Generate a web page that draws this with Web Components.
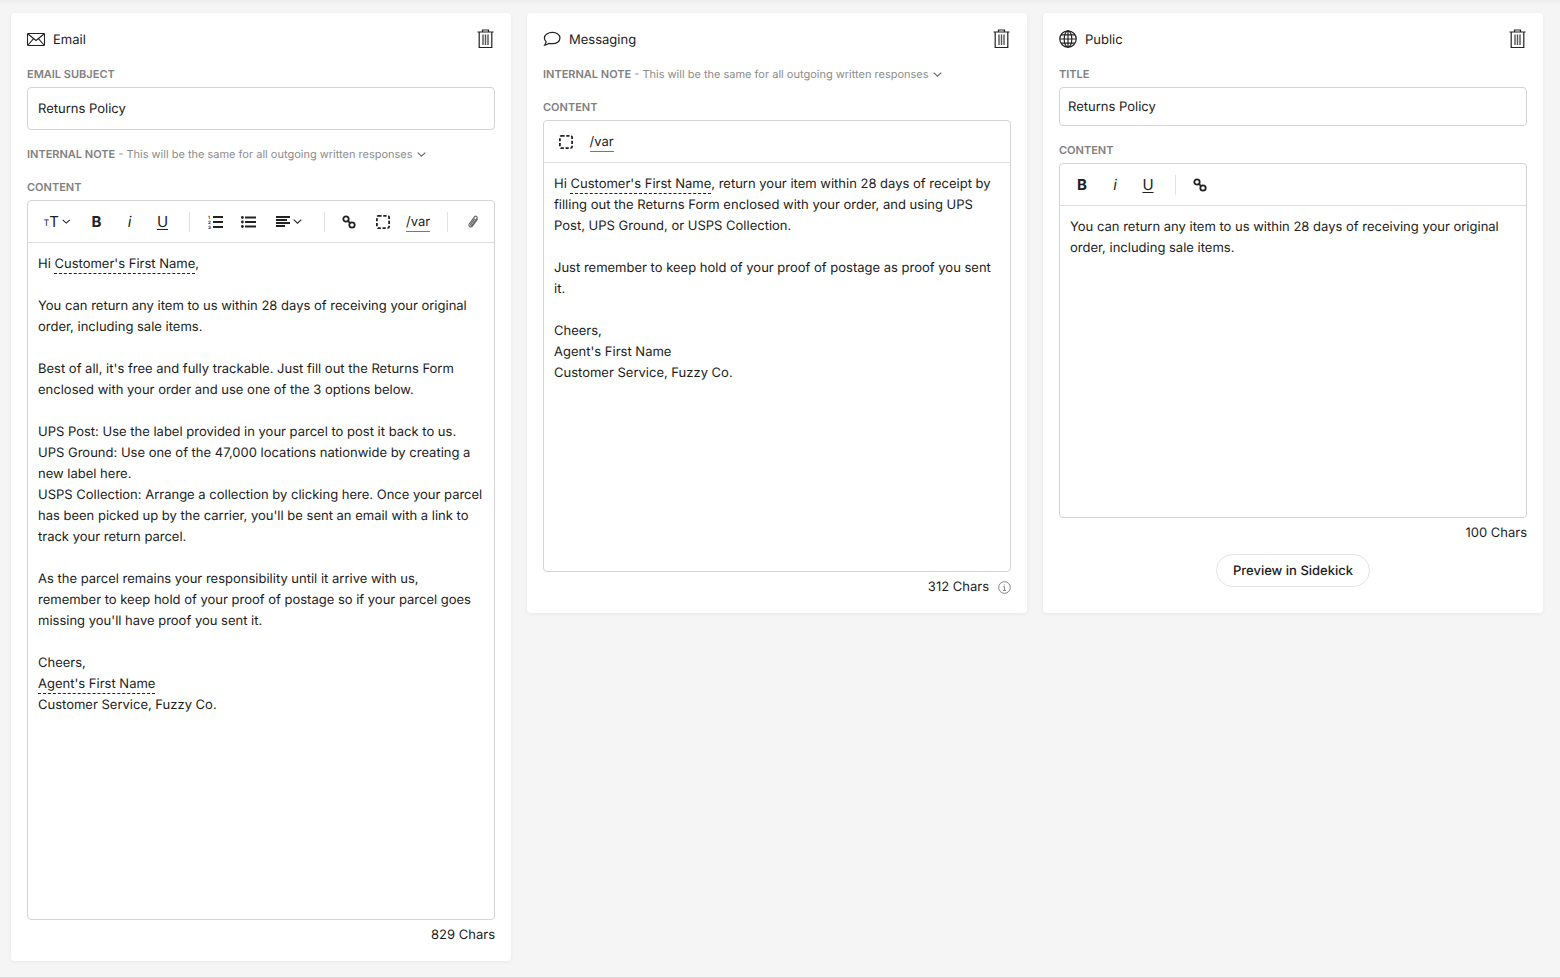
<!DOCTYPE html>
<html>
<head>
<meta charset="utf-8">
<title>Returns Policy</title>
<style>
  html, body { margin: 0; height: 100%; }
  body {
    box-sizing: border-box; height: 978px; overflow: hidden;
    padding: 13px 17px 0 11px;
    background: linear-gradient(#eeeeee, #f5f5f5 6px); border-bottom: 1px solid #d9d9d9;
    font-family: Inter, "Liberation Sans", sans-serif; font-size: 13px; color: #1c1c1c;
    text-rendering: geometricPrecision;
  }
  .board { display: flex; align-items: flex-start; gap: 16px; }
</style>
</head>
<body>
<div class="board">

  <x-card title="Email" icon="mail" height="948">
    <x-field label="Email subject" value="Returns Policy" h="43" pad="10"></x-field>
    <x-note style="margin-top:17px"></x-note>
    <x-editor tools="text,b,i,u,sep,ol,ul,align,sep,link,frame,var,sep,clip" body-h="676" count="829 Chars" style="margin-top:19px">
      <p>Hi <x-var>Customer's First Name</x-var>,</p>
      <p><br></p>
      <p>You can return any item to us within 28 days of receiving your original order, including sale items.</p>
      <p><br></p>
      <p>Best of all, it's free and fully trackable. Just fill out the Returns Form enclosed with your order and use one of the 3 options below.</p>
      <p><br></p>
      <p>UPS Post: Use the label provided in your parcel to post it back to us.</p>
      <p>UPS Ground: Use one of the 47,000 locations nationwide by creating a new label here.</p>
      <p>USPS Collection: Arrange a collection by clicking here. Once your parcel has been picked up by the carrier, you'll be sent an email with a link to track your return parcel.</p>
      <p><br></p>
      <p>As the parcel remains your responsibility until it arrive with us, remember to keep hold of your proof of postage so if your parcel goes missing you'll have proof you sent it.</p>
      <p><br></p>
      <p>Cheers,</p>
      <p><x-var>Agent's First Name</x-var></p>
      <p>Customer Service, Fuzzy Co.</p>
    </x-editor>
  </x-card>

  <x-card title="Messaging" icon="chat" height="600">
    <x-note></x-note>
    <x-editor tools="frame,var" body-h="408" count="312 Chars" info style="margin-top:19px">
      <p>Hi <x-var>Customer's First Name</x-var>, return your item within 28 days of receipt by<br>filling out the Returns Form enclosed with your order, and using UPS Post, UPS Ground, or USPS Collection.</p>
      <p><br></p>
      <p>Just remember to keep hold of your proof of postage as proof you sent it.</p>
      <p><br></p>
      <p>Cheers,</p>
      <p>Agent's First Name</p>
      <p>Customer Service, Fuzzy Co.</p>
    </x-editor>
  </x-card>

  <x-card title="Public" icon="globe" height="600">
    <x-field label="Title" value="Returns Policy" h="39" pad="8"></x-field>
    <x-editor tools="b,i,u,sep,link" body-h="311" count="100 Chars" style="margin-top:17px">
      <p>You can return any item to us within 28 days of receiving your original order, including sale items.</p>
    </x-editor>
    <x-pill style="margin-top:8px">Preview in Sidekick</x-pill>
  </x-card>

</div>

<script>
// icons, drawn by hand against the screenshot
const ICONS = {
  mail: '<svg width="18" height="13" viewBox="0 0 18 13" fill="none" stroke="#222" stroke-width="1.1"><rect x=".5" y=".5" width="17" height="12" rx="1"/><path d="M1 1l8 6.5L17 1M1 12l5.6-6.4M17 12l-5.6-6.4"/></svg>',
  chat: '<svg width="19" height="16" viewBox="0 0 19 16" fill="none" stroke="#222" stroke-width="1.3"><path d="M10 1C5.400 1 1.500 3.400 1.500 7c0 1.500.7 2.800 1.800 3.800-.2 1.400-.8 2.700-1.500 3.700 1.700-.2 3.300-1 4.300-1.900 1.100.3 2.300.4 3.900.4 4.300 0 7.900-2.500 7.900-6S14.300 1 10 1z"/></svg>',
  globe: '<svg width="18" height="18" viewBox="0 0 18 18" fill="none" stroke="#222" stroke-width="1.2"><circle cx="9" cy="9" r="8.200"/><ellipse cx="9" cy="9" rx="3.800" ry="8.200"/><path d="M9 .8v16.400M.8 9h16.400M2 4.800h14M2 13.200h14"/></svg>',
  trash: '<svg width="17" height="20" viewBox="0 0 17 20" fill="none" stroke="#222" stroke-width="1.2"><path d="M.5 3h16M5.500 3V1h6v2"/><path d="M2.200 3v15.500h12.600V3"/><path d="M6 5.500V16M8.500 5.500V16M11 5.500V16" stroke-width="1.400" stroke="#555"/></svg>',
  chevron: '<svg width="9" height="5" viewBox="0 0 9 5" fill="none" stroke="currentColor" stroke-width="1.1"><path d="M.7.7l3.800 3.500L8.300.7"/></svg>',
  ol: '<svg width="15" height="16" viewBox="0 -1 15 16" fill="#222"><path d="M5 1h10v2H5zM5 6h10v2H5zM5 11h10v2H5z"/><text x="0" y="4" font-size="4.500" font-family="Inter" font-weight="700">1</text><text x="0" y="9" font-size="4.500" font-family="Inter" font-weight="700">2</text><text x="0" y="14" font-size="4.500" font-family="Inter" font-weight="700">3</text></svg>',
  ul: '<svg width="15" height="12" viewBox="0 0 15 12" fill="#222"><path d="M4 .5h11v2H4zM4 5h11v2H4zM4 9.500h11v2H4z"/><circle cx="1.400" cy="1.500" r="1.400"/><circle cx="1.400" cy="6" r="1.400"/><circle cx="1.400" cy="10.500" r="1.400"/></svg>',
  align: '<svg width="14" height="11" viewBox="0 0 14 11" fill="#222"><path d="M0 0h14v2H0zM0 3h11v2H0zM0 6h14v2H0zM0 9h9v2H0z"/></svg>',
  link: '<svg width="14" height="14" viewBox="0 0 14 14" fill="none" stroke="#222" stroke-width="1.800"><circle cx="4" cy="4" r="2.700"/><circle cx="10" cy="10" r="2.700"/><path d="M5.800 5.800l2.400 2.400"/></svg>',
  frame: '<svg width="14" height="14" viewBox="0 0 14 14" fill="none" stroke="#222" stroke-width="1.800"><rect x=".9" y=".9" width="12.200" height="12.200" rx="1.500" stroke-dasharray="3.200 1.700"/></svg>',
  clip: '<svg width="11" height="13" viewBox="0 0 11 13" fill="none" stroke="#666" stroke-width="1.100"><path d="M9.800 3.800L4.600 10.900c-.8 1-2 1.200-2.900.6-.9-.7-1-1.800-.3-2.800l5-6.800c.6-.8 1.400-1 2.100-.5s.8 1.300.2 2.100L4 10c-.3.400-.8.500-1.100.2-.4-.3-.4-.7-.1-1.100l4-5.500"/></svg>',
  info: '<svg width="13" height="13" viewBox="0 0 13 13" fill="none" stroke="#777" stroke-width=".9"><circle cx="6.500" cy="6.500" r="5.800"/><path d="M5.300 5.600h1.300v3.800M5 9.400h3M6.400 3.400v1"/></svg>'
};

class XCard extends HTMLElement {
  connectedCallback() {
    const title = this.getAttribute('title');
    const icon = this.getAttribute('icon');
    this.removeAttribute('title');
    this.attachShadow({ mode: 'open' });
    this.shadowRoot.innerHTML = `
      <style>
        :host { display: block; box-sizing: border-box; width: 500px; height: ${this.getAttribute('height')}px;
                padding: 16px 16px 0; background: #fff; border-radius: 4px; box-shadow: 0 1px 4px rgba(0,0,0,.06); }
        header { display: flex; align-items: center; justify-content: space-between; height: 20px; margin-bottom: 18px; }
        .name { display: flex; align-items: center; }
        .label { padding-top: 2px; }
        .ico { width: 18px; display: flex; justify-content: center; margin-right: 8px; }
        .trash { display: flex; margin-right: 1px; }
      </style>
      <header>
        <span class="name"><span class="ico">${ICONS[icon]}</span><span class="label">${title}</span></span>
        <span class="trash">${ICONS.trash}</span>
      </header>
      <slot></slot>`;
  }
}
customElements.define('x-card', XCard);

class XField extends HTMLElement {
  connectedCallback() {
    this.attachShadow({ mode: 'open' });
    this.shadowRoot.innerHTML = `
      <style>
        :host { display: block; }
        label { display: block; font-size: 11px; line-height: 14px; font-weight: 600; color: #808080; text-transform: uppercase; margin-bottom: 6px; }
        div { box-sizing: border-box; height: ${this.getAttribute('h')}px; display: flex; align-items: center;
              padding: 0 ${this.getAttribute('pad')}px; border: 1px solid #d4d4d4; border-radius: 4px; }
      </style>
      <label>${this.getAttribute('label')}</label>
      <div>${this.getAttribute('value')}</div>`;
  }
}
customElements.define('x-field', XField);

class XNote extends HTMLElement {
  connectedCallback() {
    this.attachShadow({ mode: 'open' });
    this.shadowRoot.innerHTML = `
      <style>
        :host { display: flex; align-items: center; font-size: 11px; line-height: 14px; color: #8c8c8c; }
        b { font-weight: 600; color: #808080; margin-right: 3px; }
        svg { margin-left: 4px; margin-top: 1px; color: #666; }
      </style>
      <b>INTERNAL NOTE</b> - This will be the same for all outgoing written responses ${ICONS.chevron}`;
  }
}
customElements.define('x-note', XNote);

class XEditor extends HTMLElement {
  connectedCallback() {
    const tools = this.getAttribute('tools').split(',');
    const btn = {
      text: '<span class="tt"><small>T</small>T' + ICONS.chevron + '</span>',
      b: '<span class="t b">B</span>',
      i: '<span class="t i">i</span>',
      u: '<span class="t u">U</span>',
      sep: '<span class="sep"></span>',
      ol: '<span class="t">' + ICONS.ol + '</span>',
      ul: '<span class="t">' + ICONS.ul + '</span>',
      align: '<span class="al">' + ICONS.align + ICONS.chevron + '</span>',
      link: '<span class="t lk">' + ICONS.link + '</span>',
      frame: '<span class="t">' + ICONS.frame + '</span>',
      var: '<span class="v">/var</span>',
      clip: '<span class="t">' + ICONS.clip + '</span>'
    };
    const info = this.hasAttribute('info') ? ICONS.info : '';
    this.attachShadow({ mode: 'open' });
    this.shadowRoot.innerHTML = `
      <style>
        :host { display: block; }
        label { display: block; font-size: 11px; line-height: 14px; font-weight: 600; color: #808080; margin-bottom: 6px; }
        .box { border: 1px solid #d4d4d4; border-radius: 4px; }
        .bar { height: 41px; display: flex; align-items: center; padding-left: 5.5px; border-bottom: 1px solid #dedede; color: #222; }
        .t { display: flex; align-items: center; justify-content: center; width: 33px; flex: none; }
        .lk { margin-left: -.5px; width: 33.5px; }
        .sep { width: 1px; height: 20px; background: #e2e2e2; margin: 0 8.5px 0 10px; flex: none; }
        .b { font-weight: 700; font-size: 15px; }
        .i { font-style: italic; font-size: 15px; }
        .u { font-size: 15px; text-decoration: underline; text-decoration-thickness: 1px; text-underline-offset: 2px; }
        .tt { display: flex; align-items: center; font-size: 15px; width: 27px; margin: 0 9.500px 0 10px; flex: none; }
        .tt small { font-size: 9px; margin-top: 4px; }
        .tt svg, .al svg + svg { margin-left: 3px; }
        .al { display: flex; align-items: center; width: 26px; margin: 0 12px 0 11px; flex: none; }
        .v { font-size: 13px; line-height: 18px; padding-top: 2px; border-bottom: 1px solid #777; margin: 0 7px 0 7px; }
        .body { box-sizing: border-box; height: ${this.getAttribute('body-h')}px; padding: 11px 10px 9px; line-height: 21px; }
        .count { display: flex; justify-content: flex-end; align-items: center; gap: 9px; height: 26px; padding-top: 2px; }
        ::slotted(p) { margin: 0; }
      </style>
      <label>CONTENT</label>
      <div class="box">
        <div class="bar">${tools.map(t => btn[t]).join('')}</div>
        <div class="body"><slot></slot></div>
      </div>
      <div class="count"><span>${this.getAttribute('count')}</span>${info}</div>`;
  }
}
customElements.define('x-editor', XEditor);

class XVar extends HTMLElement {
  connectedCallback() {
    this.attachShadow({ mode: 'open' });
    this.shadowRoot.innerHTML = `
      <style>:host { display: inline; border-bottom: 1px dashed #222; padding-bottom: 1px; }</style>
      <slot></slot>`;
  }
}
customElements.define('x-var', XVar);

class XPill extends HTMLElement {
  connectedCallback() {
    this.attachShadow({ mode: 'open' });
    this.shadowRoot.innerHTML = `
      <style>
        :host { display: flex; justify-content: center; }
        span { box-sizing: border-box; height: 33px; padding: 0 16px; display: flex; align-items: center;
               border: 1px solid #e4e4e4; border-radius: 17px; font-weight: 500; }
      </style>
      <span><slot></slot></span>`;
  }
}
customElements.define('x-pill', XPill);
</script>
</body>
</html>
